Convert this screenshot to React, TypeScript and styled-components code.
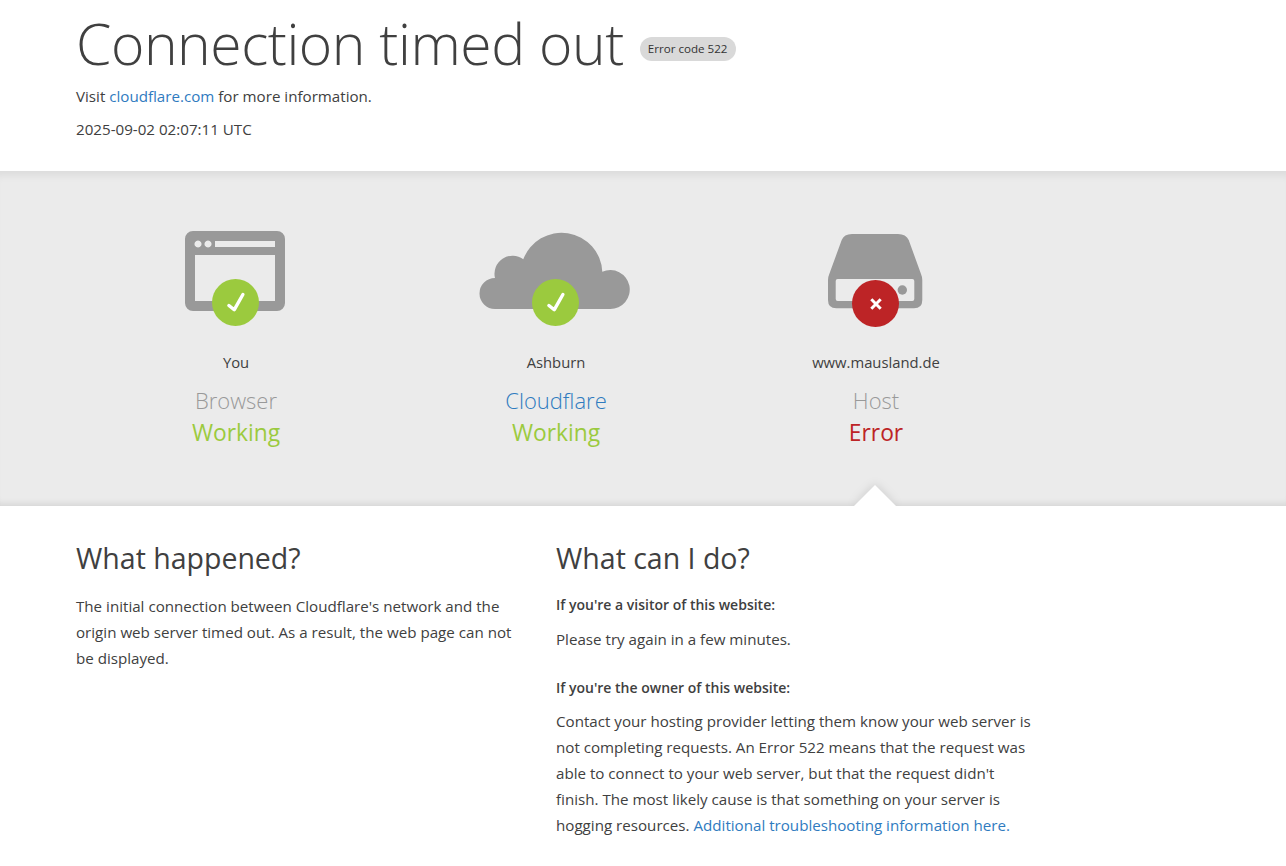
import React from 'react'
import styled, { createGlobalStyle } from 'styled-components'

const GlobalStyle = createGlobalStyle`
  html, body { margin: 0; padding: 0; background: #fff; }
  body { font-family: "Open Sans", "Noto Sans", sans-serif; color: #404040; font-size: 15.15px; line-height: 26px; overflow: hidden; }
  * { box-sizing: border-box; }
  a { color: #2f7bbf; text-decoration: none; }
`

const Page = styled.div`
  height: 866px;
  overflow: hidden;
`

const Header = styled.header`
  height: 171px;
  padding: 0 76px;
`

const TitleRow = styled.div`
  display: flex;
  align-items: center;
  height: 88px;
`

const Title = styled.h1`
  margin: 0 0 2px;
  font-size: 57px;
  font-weight: 300;
  letter-spacing: -0.45px;
  line-height: 86px;
  white-space: nowrap;
`

const Badge = styled.span`
  margin-left: 16px;
  margin-top: 10px;
  background: #d9d9d9;
  border-radius: 12px;
  color: #333;
  font-size: 11.6px;
  font-weight: 400;
  line-height: 24px;
  padding: 0 8px;
`

const Line = styled.p`
  margin: 0;
  height: 33px;
  line-height: 17px;
`

const StatusBand = styled.section`
  position: relative;
  height: 335px;
  overflow: hidden;
  background: #ebebeb;
  box-shadow: inset 0 10px 9px -6px rgba(0, 0, 0, 0.07), inset 0 -8px 7px -6px rgba(0, 0, 0, 0.1);
  display: flex;
  padding-left: 76px;
`

const Node = styled.div`
  width: 320px;
  display: flex;
  flex-direction: column;
  align-items: center;
  padding-top: 60px;
`

const IconWrap = styled.div`
  position: relative;
  width: 160px;
  height: 95px;
`

const IconSvg = styled.svg`
  display: block;
`

const StatusDot = styled.span<{ $ok: boolean }>`
  position: absolute;
  left: 56px;
  top: ${p => (p.$ok ? '48px' : '49px')};
  width: 47px;
  height: 47px;
  border-radius: 50%;
  background: ${p => (p.$ok ? '#9bca3e' : '#bd2426')};
  display: flex;
  align-items: center;
  justify-content: center;
`

const Place = styled.div`
  margin-top: 25px;
  font-size: 14.8px;
  line-height: 22px;
  height: 22px;
`

const Kind = styled.div`
  margin-top: 11px;
  font-size: 22px;
  font-weight: 300;
  line-height: 32px;
  color: #999;
`

const KindLink = styled.a`
  color: #2f7bbf;
`

const State = styled.div<{ $ok: boolean }>`
  margin-top: 2px;
  font-size: 22.8px;
  font-weight: 400;
  line-height: 30px;
  color: ${p => (p.$ok ? '#9bca3e' : '#bd2426')};
`

const Notch = styled.div`
  position: absolute;
  left: 854px;
  bottom: 0;
  width: 0;
  height: 0;
  border-left: 21px solid transparent;
  border-right: 21px solid transparent;
  border-bottom: 21px solid #fff;
  filter: drop-shadow(0 -1px 5px rgba(0, 0, 0, 0.12));
`

const Details = styled.section`
  display: grid;
  grid-template-columns: 480px 480px;
  padding: 32px 0 0 76px;
`

const Column = styled.div`
  padding-right: 0;
`

const LeftText = styled.p`
  margin: 0;
  padding-top: 1px;
  width: 450px;
`

const Heading = styled.h2`
  margin: 0 0 14.4px;
  font-size: 28.5px;
  font-weight: 400;
  line-height: 40px;
`

const SubHead = styled.h5`
  margin: 0 0 7.2px;
  font-size: 14px;
  font-weight: 600;
  line-height: 26px;
`

const Para = styled.p`
  margin: 0 0 23.4px;
`

const CheckMark = () => (
  <svg width="22" height="22" viewBox="0 0 22 22">
    <path d="M3.9 13.5 L9.2 17.8 L17.9 2.5" fill="none" stroke="#fff" strokeWidth="3.4" strokeLinecap="round" strokeLinejoin="round" />
  </svg>
)

const CrossMark = () => (
  <svg width="14" height="14" viewBox="0 0 14 14">
    <path d="M2.3 2.3 L11.7 11.7 M11.7 2.3 L2.3 11.7" fill="none" stroke="#fff" strokeWidth="3" />
  </svg>
)

const BrowserIcon = () => (
  <IconSvg width="160" height="95" viewBox="0 0 160 95">
    <path
      fill="#999"
      fillRule="evenodd"
      d="M37 0h84a8 8 0 0 1 8 8v64a8 8 0 0 1-8 8H37a8 8 0 0 1-8-8V8a8 8 0 0 1 8-8zM39 24v46h80V24zM59 10v6h60v-6zM42 9.500a3.500 3.500 0 1 0 .01 0zM52 9.500a3.500 3.500 0 1 0 .01 0z"
    />
  </IconSvg>
)

const CloudIcon = () => (
  <IconSvg width="160" height="95" viewBox="0 0 160 95">
    <path
      fill="#999"
      d="M19 78A15.500 15.500 0 0 1 19 47A18 18 0 0 1 47.300 28.300A40.800 40.800 0 0 1 126.300 40.700A19.500 19.500 0 1 1 134 78Z"
    />
  </IconSvg>
)

const ServerIcon = () => (
  <IconSvg width="160" height="95" viewBox="0 0 160 95">
    <path
      fill="#999"
      fillRule="evenodd"
      d="M56 3H102Q110 3 112.700 9L125 43Q126.300 46 126.300 49V69Q126.300 77.300 118 77.300H40.300Q32 77.300 32 69V49Q32 46 33.300 43L45.700 9Q48 3 56 3ZM41.700 48Q39.700 48 39.700 50V68Q39.700 70 41.700 70H116.300Q118.300 70 118.300 68V50Q118.300 48 116.300 48Z"
    />
    <circle cx="106.300" cy="59" r="4.700" fill="#999" />
  </IconSvg>
)

const App: React.FC = () => (
  <Page>
    <GlobalStyle />
    <Header>
      <TitleRow>
        <Title>Connection timed out</Title>
        <Badge>Error code 522</Badge>
      </TitleRow>
      <Line>
        Visit <a href="#">cloudflare.com</a> for more information.
      </Line>
      <Line>2025-09-02 02:07:11 UTC</Line>
    </Header>
    <StatusBand>
      <Node>
        <IconWrap>
          <BrowserIcon />
          <StatusDot $ok><CheckMark /></StatusDot>
        </IconWrap>
        <Place>You</Place>
        <Kind>Browser</Kind>
        <State $ok>Working</State>
      </Node>
      <Node>
        <IconWrap>
          <CloudIcon />
          <StatusDot $ok><CheckMark /></StatusDot>
        </IconWrap>
        <Place>Ashburn</Place>
        <Kind><KindLink href="#">Cloudflare</KindLink></Kind>
        <State $ok>Working</State>
      </Node>
      <Node>
        <IconWrap>
          <ServerIcon />
          <StatusDot $ok={false}><CrossMark /></StatusDot>
        </IconWrap>
        <Place>www.mausland.de</Place>
        <Kind>Host</Kind>
        <State $ok={false}>Error</State>
      </Node>
      <Notch />
    </StatusBand>
    <Details>
      <Column>
        <Heading>What happened?</Heading>
        <LeftText>
          The initial connection between Cloudflare's network and the origin web server timed out. As a result, the web page can not be displayed.
        </LeftText>
      </Column>
      <Column>
        <Heading>What can I do?</Heading>
        <SubHead>If you're a visitor of this website:</SubHead>
        <Para>Please try again in a few minutes.</Para>
        <SubHead>If you're the owner of this website:</SubHead>
        <Para>
          Contact your hosting provider letting them know your web server is not completing requests. An Error 522 means that the request was able to connect to your web server, but that the request didn't finish. The most likely cause is that something on your server is hogging resources. <a href="#">Additional troubleshooting information here.</a>
        </Para>
      </Column>
    </Details>
  </Page>
)

export default App
